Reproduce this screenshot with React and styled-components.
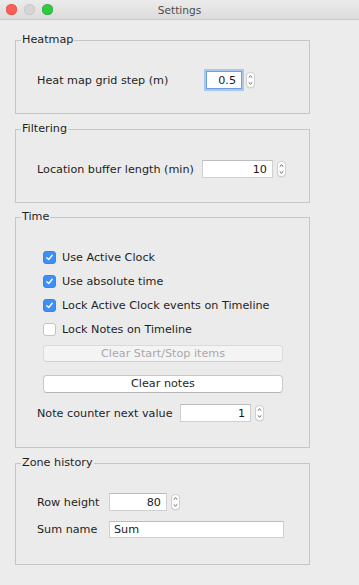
import React from "react";
import styled, { createGlobalStyle } from "styled-components";

const Global = createGlobalStyle`
  html, body { margin: 0; padding: 0; background: #ececec; }
  body { font-family: "DejaVu Sans", "Liberation Sans", sans-serif; color: #1f1f1f; }
  #root { width: 359px; height: 585px; }
`;

const FS = "11.2px";

const Win = styled.div`
  width: 359px;
  height: 585px;
  background: #ececec;
  display: flex;
  flex-direction: column;
  overflow: hidden;
`;

const TitleBar = styled.div`
  height: 19px;
  flex: none;
  display: grid;
  grid-template-columns: 1fr auto 1fr;
  align-items: center;
  background: linear-gradient(#ebebeb, #dcdcdc);
  border-bottom: 1px solid #c9c9c9;
`;

const Lights = styled.div`
  display: flex;
  gap: 7px;
  padding-left: 6px;
`;

const Light = styled.span`
  width: 11px;
  height: 11px;
  border-radius: 50%;
  background: ${(p) => p.$c};
  box-shadow: inset 0 0 0 0.5px ${(p) => p.$b};
`;

const Title = styled.div`
  font-size: 10.6px;
  color: #4d4d4d;
`;

const Content = styled.div`
  padding: 0 49px 0 15px;
  display: flex;
  flex-direction: column;
`;

const Group = styled.fieldset`
  margin: ${(p) => p.$mt}px 0 0 0;
  padding: 0;
  border: 1px solid #c6c6c6;
  min-width: 0;
  background: #ebebeb;
`;

const Legend = styled.legend`
  margin-left: 5px;
  padding: 0 1px;
  font-size: ${FS};
  line-height: 14px;
  color: #1f1f1f;
`;

const Body = styled.div`
  padding: ${(p) => p.$pt}px 0 ${(p) => p.$pb}px 21px;
  display: flex;
  flex-direction: column;
`;

const Row = styled.div`
  display: grid;
  grid-template-columns: ${(p) => p.$label}px ${(p) => p.$input}px auto;
  align-items: center;
  height: ${(p) => p.$h || 18}px;
  margin-top: ${(p) => p.$mt || 0}px;
`;

const Label = styled.span`
  font-size: ${FS};
  white-space: nowrap;
  color: #1f1f1f;
`;

const Field = styled.div`
  height: ${(p) => p.$h || 18}px;
  box-sizing: border-box;
  background: #fff;
  border: 1px solid #cfcfcf;
  border-top-color: #bdbdbd;
  font-size: ${FS};
  display: flex;
  align-items: center;
  justify-content: ${(p) => (p.$left ? "flex-start" : "flex-end")};
  padding: 0 5px 0 4px;
  color: #1a1a1a;
  ${(p) =>
    p.$focus &&
    `border: 1px solid #6c9fdc; box-shadow: 0 0 0 2px #a9c8ef;`}
`;

const StepperBox = styled.span`
  width: 9px;
  height: 16px;
  margin-left: 4px;
  display: inline-flex;
  box-sizing: border-box;
  border: 1px solid #d0d0d0;
  border-radius: 4px;
  background: #fff;
  box-shadow: 0 0.5px 0.5px rgba(0,0,0,0.1);
`;

const Stepper = () => (
  <StepperBox>
    <svg width="7" height="14" viewBox="0 0 7 14">
      <path d="M1.7 4.6 L3.5 2.9 L5.3 4.6" fill="none" stroke="#555" strokeWidth="1" />
      <path d="M1.7 9.4 L3.5 11.1 L5.3 9.4" fill="none" stroke="#555" strokeWidth="1" />
    </svg>
  </StepperBox>
);

const Checks = styled.div`
  display: flex;
  flex-direction: column;
  gap: 4px;
  padding-left: 6px;
`;

const CheckRow = styled.label`
  display: flex;
  align-items: center;
  height: 20px;
  gap: 6px;
  font-size: ${FS};
  color: #1f1f1f;
`;

const Box = styled.span`
  width: 13px;
  height: 13px;
  box-sizing: border-box;
  border-radius: 3px;
  display: inline-flex;
  align-items: center;
  justify-content: center;
  background: ${(p) => (p.$on ? "#3d8ff5" : "#fff")};
  border: 1px solid ${(p) => (p.$on ? "#3585ec" : "#c4c4c4")};
`;

const Check = ({ on, children }) => (
  <CheckRow>
    <Box $on={on}>
      {on && (
        <svg width="9" height="9" viewBox="0 0 9 9">
          <path d="M1.8 4.8 L3.7 6.6 L7.2 2.2" fill="none" stroke="#fff" strokeWidth="1.4" strokeLinecap="round" strokeLinejoin="round" />
        </svg>
      )}
    </Box>
    {children}
  </CheckRow>
);

const Button = styled.button`
  margin: ${(p) => p.$mt}px 0 0 6px;
  width: 240px;
  height: ${(p) => p.$h}px;
  padding: 0;
  box-sizing: border-box;
  border: 1px solid ${(p) => (p.disabled ? "#dadada" : "#c8c8c8")};
  border-bottom-color: ${(p) => (p.disabled ? "#d2d2d2" : "#b5b5b5")};
  border-radius: 4px;
  background: ${(p) => (p.disabled ? "#f4f4f4" : "#fff")};
  color: ${(p) => (p.disabled ? "#a9a9a9" : "#1f1f1f")};
  font-family: inherit;
  font-size: ${FS};
  line-height: 1;
`;

export default function App() {
  return (
    <Win>
      <Global />
      <TitleBar>
        <Lights>
          <Light $c="#fc5f57" $b="#e1483f" />
          <Light $c="#d5d5d5" $b="#c4c4c4" />
          <Light $c="#33c748" $b="#27aa35" />
        </Lights>
        <Title>Settings</Title>
        <span />
      </TitleBar>
      <Content>
        <Group $mt={13}>
          <Legend>Heatmap</Legend>
          <Body $pt={24} $pb={24}>
            <Row $label={169} $input={36}>
              <Label>Heat map grid step (m)</Label>
              <Field $focus>0.5</Field>
              <Stepper />
            </Row>
          </Body>
        </Group>
        <Group $mt={8}>
          <Legend>Filtering</Legend>
          <Body $pt={24} $pb={24}>
            <Row $label={165} $input={71}>
              <Label>Location buffer length (min)</Label>
              <Field>10</Field>
              <Stepper />
            </Row>
          </Body>
        </Group>
        <Group $mt={7}>
          <Legend>Time</Legend>
          <Body $pt={23} $pb={25}>
            <Checks>
              <Check on>Use Active Clock</Check>
              <Check on>Use absolute time</Check>
              <Check on>Lock Active Clock events on Timeline</Check>
              <Check>Lock Notes on Timeline</Check>
            </Checks>
            <Button disabled $mt={6} $h={17}>Clear Start/Stop items</Button>
            <Button $mt={13} $h={18}>Clear notes</Button>
            <Row $label={143} $input={71} $mt={11}>
              <Label>Note counter next value</Label>
              <Field>1</Field>
              <Stepper />
            </Row>
          </Body>
        </Group>
        <Group $mt={8}>
          <Legend>Zone history</Legend>
          <Body $pt={23} $pb={26}>
            <Row $label={72} $input={58}>
              <Label>Row height</Label>
              <Field>80</Field>
              <Stepper />
            </Row>
            <Row $label={72} $input={175} $mt={10} $h={17}>
              <Label>Sum name</Label>
              <Field $left $h={17}>Sum</Field>
            </Row>
          </Body>
        </Group>
      </Content>
    </Win>
  );
}
